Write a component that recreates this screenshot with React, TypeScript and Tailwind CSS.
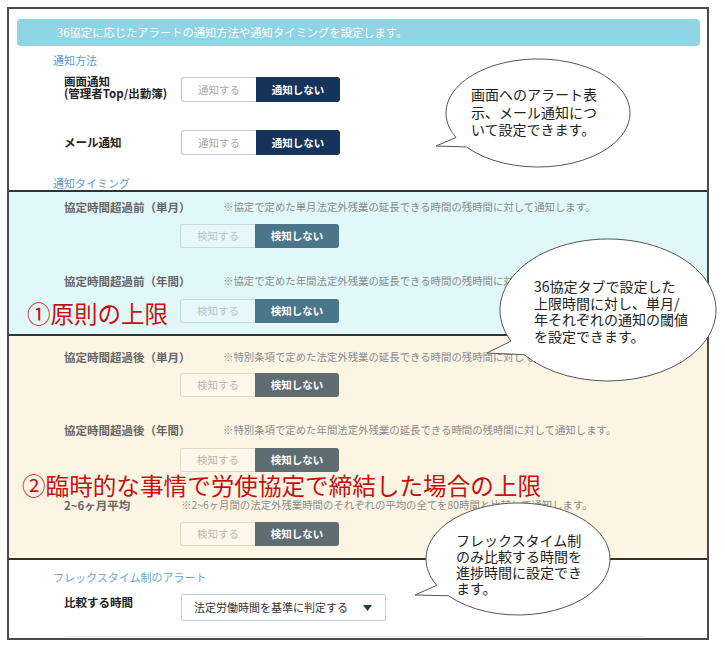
import React from "react";

type Variant = "navy" | "teal" | "slate";

function Toggle({ v, on, off, h = "h-[24px]" }: { v: Variant; on: string; off: string; h?: string }) {
  const left =
    v === "navy"
      ? "border-[#c9c9c9] bg-white text-[#a9a9a9]"
      : v === "teal"
      ? "border-[#c3dcdd] bg-[#e7f8f8] text-[#b3c6c7]"
      : "border-[#e0d8c9] bg-[#fdf7ea] text-[#bbb5ab]";
  const right = v === "navy" ? "bg-[#163459]" : v === "teal" ? "bg-[#4b7589]" : "bg-[#5f6d72]";
  return (
    <div className={`flex ${h} text-[10.5px]`}>
      <div className={`w-[75px] flex items-center justify-center border border-r-0 rounded-l-[3px] ${left}`}>{on}</div>
      <div className={`w-[84px] flex items-center justify-center rounded-r-[3px] text-white font-bold ${right}`}>{off}</div>
    </div>
  );
}

function Bubble({ cx, cy, rx, ry, tx, ty, a1, a2 }: { cx: number; cy: number; rx: number; ry: number; tx: number; ty: number; a1: number; a2: number }) {
  const p = (a: number) => [cx + rx * Math.cos((a * Math.PI) / 180), cy + ry * Math.sin((a * Math.PI) / 180)];
  const [x1, y1] = p(a1);
  const [x2, y2] = p(a2);
  const d = `M ${x2} ${y2} A ${rx} ${ry} 0 1 0 ${x1} ${y1} L ${tx} ${ty} Z`;
  return <path d={d} fill="white" stroke="#555" strokeWidth={1} />;
}

export default function App() {
  const labelGray = "text-[11.5px] font-bold text-[#666] leading-[16px]";
  const note = "text-[10.4px] text-[#8a8a8a] leading-[16px] whitespace-nowrap";
  return (
    <div className="relative w-[725px] h-[647px] bg-white overflow-hidden font-['Noto_Sans_CJK_JP',sans-serif]">
      <div className="ml-[7px] mt-[7px] w-[702px] h-[633px] border-2 border-[#4a4a4a] flex flex-col">
        <div className="flex-none ml-[8px] mt-[10px] w-[683px] h-[27px] rounded-[4px] bg-[#8fd4e4] flex items-center pl-[40px] text-[11.3px] text-white">
          36協定に応じたアラートの通知方法や通知タイミングを設定します。
        </div>
        <div className="flex-none ml-[44px] mt-[7px] h-[14px] leading-[14px] text-[11px] text-[#5b9bd1]">通知方法</div>
        <div className="flex-none mt-[10px] h-[25px] flex pl-[55px]">
          <div className="w-[117px] -mt-[2px] text-[11.5px] leading-[12px] font-bold text-[#222]">
            画面通知
            <br />
            (管理者Top/出勤簿)
          </div>
          <Toggle v="navy" on="通知する" off="通知しない" h="h-[25px]" />
        </div>
        <div className="flex-none mt-[28px] h-[25px] flex items-center pl-[55px]">
          <div className="w-[117px] text-[11.5px] font-bold text-[#222]">メール通知</div>
          <Toggle v="navy" on="通知する" off="通知しない" h="h-[25px]" />
        </div>
        <div className="flex-none ml-[44px] mt-[21px] h-[14px] leading-[14px] text-[11px] text-[#5b9bd1]">通知タイミング</div>

        {/* cyan section */}
        <div className="flex-none h-[146px] border-t-2 border-b-2 border-[#333] bg-[#e1f8f9] flex flex-col">
          <div className="mt-[7px] h-[16px] flex pl-[55px]">
            <div className={`w-[159px] ${labelGray}`}>協定時間超過前（単月）</div>
            <div className={note}>※協定で定めた単月法定外残業の延長できる時間の残時間に対して通知します。</div>
          </div>
          <div className="mt-[9px] pl-[171px]">
            <Toggle v="teal" on="検知する" off="検知しない" />
          </div>
          <div className="mt-[25px] h-[16px] flex pl-[55px]">
            <div className={`w-[159px] ${labelGray}`}>協定時間超過前（年間）</div>
            <div className={note}>※協定で定めた年間法定外残業の延長できる時間の残時間に対して通知します。</div>
          </div>
          <div className="mt-[10px] h-[24px] flex items-center pl-[18px]">
            <div className="w-[153px] text-[23.5px] leading-[24px] text-[#c81010] whitespace-nowrap mt-[3px]">①原則の上限</div>
            <Toggle v="teal" on="検知する" off="検知しない" />
          </div>
        </div>

        {/* beige section */}
        <div className="flex-none h-[224px] border-b-2 border-[#333] bg-[#fdf5e4] flex flex-col">
          <div className="mt-[13px] h-[16px] flex pl-[55px]">
            <div className={`w-[159px] ${labelGray}`}>協定時間超過後（単月）</div>
            <div className={note}>※特別条項で定めた法定外残業の延長できる時間の残時間に対して通知します。</div>
          </div>
          <div className="mt-[8px] pl-[171px]">
            <Toggle v="slate" on="検知する" off="検知しない" />
          </div>
          <div className="mt-[25px] h-[16px] flex pl-[55px]">
            <div className={`w-[159px] ${labelGray}`}>協定時間超過後（年間）</div>
            <div className={note}>※特別条項で定めた年間法定外残業の延長できる時間の残時間に対して通知します。</div>
          </div>
          <div className="mt-[10px] pl-[171px]">
            <Toggle v="slate" on="検知する" off="検知しない" />
          </div>
          <div className="mt-[1px] h-[24px] pl-[13px] text-[23.6px] leading-[24px] text-[#c81010] whitespace-nowrap">
            ②臨時的な事情で労使協定で締結した場合の上限
          </div>
          <div className="h-[16px] flex pl-[55px]">
            <div className={`w-[117px] ${labelGray} text-[#555]`}>2~6ヶ月平均</div>
            <div className={note}>※2~6ヶ月間の法定外残業時間のそれぞれの平均の全てを80時間と比較して通知します。</div>
          </div>
          <div className="mt-[9px] pl-[171px]">
            <Toggle v="slate" on="検知する" off="検知しない" />
          </div>
        </div>

        <div className="flex-none ml-[44px] mt-[10px] h-[14px] leading-[14px] text-[11px] text-[#6aa8d8]">フレックスタイム制のアラート</div>
        <div className="flex-none mt-[10px] h-[27px] flex items-center pl-[55px]">
          <div className="w-[117px] -mt-[10px] text-[11.5px] font-bold text-[#222]">比較する時間</div>
          <div className="w-[205px] h-[27px] border border-[#bcd0e2] rounded-[2px] bg-white flex items-center justify-between pl-[12px] pr-[13px]">
            <span className="text-[11px] text-[#333]">法定労働時間を基準に判定する</span>
            <svg width="9" height="6" viewBox="0 0 9 6">
              <path d="M0 0 L9 0 L4.5 6 Z" fill="#2a3a4a" />
            </svg>
          </div>
        </div>
        <div className="flex-none ml-[56px] mt-[15px] w-[580px] h-[1px] bg-[#e6e6e6]" />
      </div>

      {/* speech bubbles overlay */}
      <svg className="absolute left-0 top-0 pointer-events-none" width="725" height="647" viewBox="0 0 725 647">
        <Bubble cx={538} cy={113} rx={92} ry={54} tx={436} ty={146} a1={153} a2={141} />
        <Bubble cx={608} cy={310} rx={108} ry={71} tx={487} ty={353} a1={154} a2={141} />
        <Bubble cx={518} cy={559} rx={92} ry={56} tx={415} ty={595} a1={152} a2={139} />
      </svg>
      <div className="absolute left-[471px] top-[86px] text-[14px] leading-[17.5px] text-[#222] whitespace-nowrap">
        画面へのアラート表
        <br />
        示、メール通知につ
        <br />
        いて設定できます。
      </div>
      <div className="absolute left-[534px] top-[278px] text-[14px] leading-[16.7px] text-[#222] whitespace-nowrap">
        36協定タブで設定した
        <br />
        上限時間に対し、単月/
        <br />
        年それぞれの通知の閾値
        <br />
        を設定できます。
      </div>
      <div className="absolute left-[456px] top-[532px] text-[14px] leading-[16px] text-[#222] whitespace-nowrap">
        フレックスタイム制
        <br />
        のみ比較する時間を
        <br />
        進捗時間に設定でき
        <br />
        ます。
      </div>
    </div>
  );
}
